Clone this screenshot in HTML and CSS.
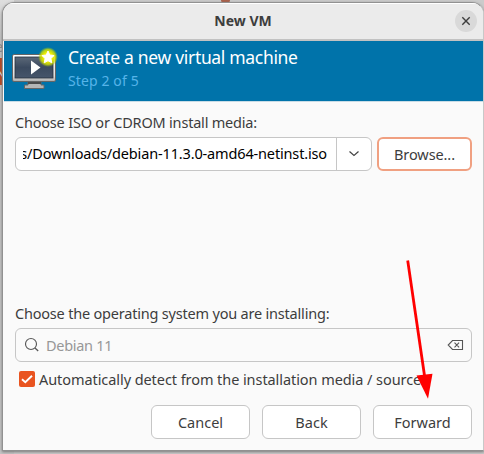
FILE: index.html
```html
<!DOCTYPE html>
<html lang="en">
<head>
<meta charset="utf-8">
<title>New VM</title>
<link rel="stylesheet" href="styles.css">
</head>
<body>
<div class="behind"><span class="behind-top">e</span><span class="behind-tab">N</span></div>
<div class="behind-dot"></div>
<main class="window">
  <header class="titlebar">
    <h1 class="title">New VM</h1>
    <button class="close" aria-label="Close"><svg width="10" height="10" viewBox="0 0 10 10"><path d="M1.300 1.300 8.700 8.700M8.700 1.300 1.300 8.700" fill="none" stroke="#3d3d3d" stroke-width="1.400"/></svg></button>
  </header>
  <section class="banner">
    <svg class="monitor" width="50" height="48" viewBox="0 0 50 48">
      <defs>
        <linearGradient id="frame" x2="0" y2="1"><stop offset="0" stop-color="#fff"/><stop offset=".8" stop-color="#ddd"/><stop offset="1" stop-color="#aaa"/></linearGradient>
        <linearGradient id="screen" x2="0" y2="1"><stop offset="0" stop-color="#5b6878"/><stop offset=".5" stop-color="#3b4a5f"/><stop offset="1" stop-color="#46556b"/></linearGradient>
        <radialGradient id="glow"><stop offset=".45" stop-color="#f0f000"/><stop offset=".75" stop-color="#d2e000" stop-opacity=".8"/><stop offset="1" stop-color="#a0c800" stop-opacity="0"/></radialGradient>
      </defs>
      <path d="M18 35h13v4h3v3.500H14.500V39H18z" fill="#b5b5b5" stroke="#666"/>
      <path d="M18 36h13v2H18z" fill="#4a4a4a"/>
      <rect x="2.500" y="8.500" width="43" height="27" rx="1.500" fill="url(#frame)" stroke="#656565"/>
      <rect x="5" y="11" width="38" height="21" fill="url(#screen)" stroke="#26313e" stroke-width=".8"/>
      <path d="M21 14.500v14l9.500-7z" fill="#fff"/>
      <circle cx="38" cy="11" r="10" fill="url(#glow)"/>
      <path d="m38 5 1.800 4 4.300.5-3.200 3 .9 4.300-3.800-2.100-3.800 2.100.9-4.300-3.200-3 4.300-.5z" fill="#fff" stroke="#fff" stroke-linejoin="round"/>
    </svg>
    <div>
      <h2 class="heading">Create a new virtual machine</h2>
      <p class="step">Step 2 of 5</p>
    </div>
  </section>
  <section class="content">
    <div class="label media-label">Choose ISO or CDROM install media:</div>
    <div class="media-row">
      <div class="combo">
        <div class="path"><span>s/Downloads/debian-11.3.0-amd64-netinst.iso</span></div>
        <div class="drop"><svg width="12" height="8" viewBox="0 0 12 8"><path d="m1.500 1.500 4.500 4 4.500-4" fill="none" stroke="#444" stroke-width="1.200"/></svg></div>
      </div>
      <button class="btn browse">Browse...</button>
    </div>
    <div class="label os-label">Choose the operating system you are installing:</div>
    <div class="search">
      <svg width="16" height="16" viewBox="0 0 16 16"><circle cx="7" cy="7" r="5.500" fill="none" stroke="#5a5a5a" stroke-width="1.150"/><path d="m11 11 3.200 3" stroke="#5a5a5a" stroke-width="1.300"/></svg>
      <span class="query">Debian 11</span>
      <svg width="17" height="12" viewBox="0 0 17 12"><path d="M5.500 1.500h10v9h-10L1.200 6zM7.500 3.700l4.600 4.600M12.100 3.700 7.500 8.300" fill="none" stroke="#555" stroke-width="1.100"/></svg>
    </div>
    <div class="detect">
      <span class="check"><svg width="16" height="16" viewBox="0 0 16 16"><path d="m3 8.200 3.300 3L13 4.800" fill="none" stroke="#fff" stroke-width="1.900"/></svg></span>
      <span class="label detect-label">Automatically detect from the installation media / source</span>
    </div>
    <div class="actions">
      <button class="btn cancel">Cancel</button>
      <button class="btn back">Back</button>
      <button class="btn forward">Forward</button>
    </div>
  </section>
</main>
<svg class="arrow" width="484" height="454" viewBox="0 0 484 454"><path d="M407.700 260.500 425 379" stroke="#f00" stroke-width="2.800"/><path d="m416.500 375.500 16-1.700-4.500 25z" fill="#f00"/></svg>
</body>
</html>
```
FILE: styles.css
```css
* { box-sizing: border-box; }
body {
  margin: 0;
  width: 484px;
  height: 454px;
  overflow: hidden;
  position: relative;
  background: #cbcbcb;
  font: 14.5px/20px "Noto Sans", "Open Sans", sans-serif;
  color: #3d3d3d;
}
h1, h2, p { margin: 0; font-weight: 400; }
svg { display: block; flex: none; }
.behind {
  position: absolute;
  inset: 0 auto 0 0;
  width: 14px;
  padding-top: 36px;
  background: linear-gradient(#dedede, #c4c4c4 40px);
  color: #888;
}
.behind span { display: block; height: 22px; text-indent: -5px; }
.behind .behind-tab { height: 27px; padding-top: 4px; background: #bd4218; color: #ddd; }
.behind-dot {
  position: absolute;
  left: 221px;
  top: 0;
  width: 9px;
  height: 3px;
  border-radius: 0 0 4px 4px;
  background: #a9604a;
}
.window {
  position: relative;
  width: 482px;
  height: 449px;
  margin: 2px 0 0 2px;
  border: 1px solid #919191;
  border-right-color: #c8c8c8;
  border-radius: 12px 12px 0 0;
  background: #fafafa;
  overflow: hidden;
  box-shadow: 0 1px 3px #777;
}
.titlebar {
  height: 38px;
  display: grid;
  grid-template-columns: 1fr auto 1fr;
  align-items: center;
  background: #ebebeb;
  border-top: 1px solid #fff;
  border-bottom: 2px solid #c2c2c2;
}
.title { grid-column: 2; margin-top: -2px; font-size: 14px; font-weight: 700; }
.close {
  justify-self: end;
  display: grid;
  place-items: center;
  width: 22px;
  height: 22px;
  margin: -2px 6px 0 0;
  padding: 0;
  border: 0;
  border-radius: 50%;
  background: #d9d9d9;
}
.banner {
  display: flex;
  height: 61px;
  margin-left: 1px;
  padding-left: 6px;
  background: #0073aa;
  border-bottom: 1px solid #c8dce6;
}
.monitor { margin-top: 5px; }
.heading { margin: 4px 0 0 8px; font-size: 17.5px; line-height: 24px; letter-spacing: -.32px; color: #fff; }
.step { margin: 2px 0 0 8px; font-size: 14px; letter-spacing: .12px; color: #56b4e9; line-height: 20px; }
.content { padding: 10px 11px 0 12px; }
.label { white-space: nowrap; height: 20px; letter-spacing: -.2px; }
.media-row { display: flex; gap: 5px; margin-top: 5px; }
.combo {
  display: flex;
  width: 357px;
  height: 34px;
  border: 1px solid #c6c6c6;
  border-radius: 6px;
  background: #fff;
  color: #000;
}
.path {
  display: flex;
  justify-content: flex-end;
  width: 304px;
  margin: 0 9px 0 7px;
  overflow: hidden;
  white-space: nowrap;
  line-height: 31px;
  letter-spacing: -.15px;
}
.drop { display: grid; place-items: center; flex: 1; border-left: 1px solid #c6c6c6; }
.btn {
  width: 99px;
  height: 34px;
  padding: 0 0 1px;
  border: 1px solid #c6c6c6;
  border-radius: 6px;
  background: #fff;
  font: inherit;
  color: #3d3d3d;
}
.browse { width: 95px; border: 2px solid #f0a081; letter-spacing: -.1px; }
.os-label { margin-top: 132px; }
.search {
  display: flex;
  align-items: center;
  height: 34px;
  margin-top: 5px;
  padding: 0 7px 0 8px;
  border: 1px solid #c6c6c6;
  border-radius: 6px;
}
.query { flex: 1; margin: -1px 0 0 6px; letter-spacing: -.3px; color: #979797; }
.detect { display: flex; align-items: center; gap: 4px; height: 20px; margin: 7px 0 0 4px; }
.check { width: 16px; height: 16px; border-radius: 2px; background: #e95420; }
.detect-label { letter-spacing: -.07px; margin-top: -1px; }
.actions { display: flex; justify-content: flex-end; gap: 12px; margin-top: 16px; }
.arrow { position: absolute; left: 0; top: 0; }
```
